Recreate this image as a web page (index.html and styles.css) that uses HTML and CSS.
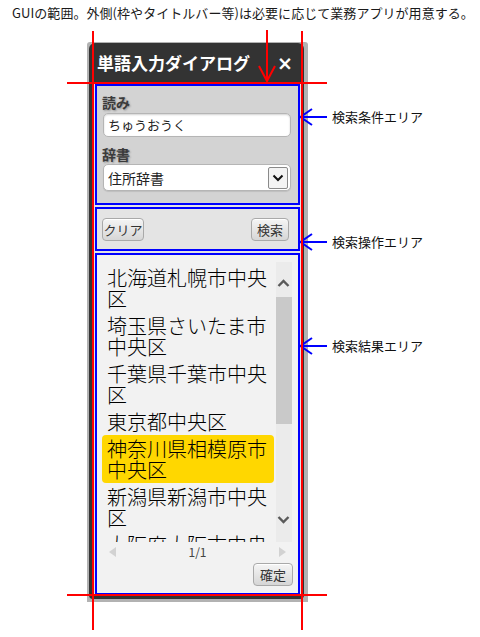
FILE: index.html
```html
<!DOCTYPE html>
<html lang="ja">
<head>
<meta charset="utf-8">
<title>単語入力ダイアログ</title>
<link rel="stylesheet" href="styles.css">
</head>
<body>
<p class="caption">GUIの範囲。外側(枠やタイトルバー等)は必要に応じて業務アプリが用意する。</p>
<div class="stage">
  <div class="backdrop">
    <div class="dialog">
      <div class="titlebar">
        <span class="title">単語入力ダイアログ</span>
        <span class="close">×</span>
      </div>
      <div class="body">
        <section class="area cond">
          <div class="label">読み</div>
          <div class="input">ちゅうおうく</div>
          <div class="label label-gap">辞書</div>
          <div class="select">
            <span class="select-text">住所辞書</span>
            <span class="drop"><svg width="12" height="8" viewBox="0 0 12 8"><polyline points="1.5,1.5 6,6 10.5,1.5" fill="none" stroke="#111" stroke-width="2"/></svg></span>
          </div>
        </section>
        <section class="area ops">
          <button class="btn btn-clear">クリア</button>
          <button class="btn btn-search">検索</button>
        </section>
        <section class="area results">
          <div class="listwrap">
            <ul class="list">
              <li class="item">北海道札幌市中央区</li>
              <li class="item">埼玉県さいたま市中央区</li>
              <li class="item">千葉県千葉市中央区</li>
              <li class="item">東京都中央区</li>
              <li class="item selected">神奈川県相模原市中央区</li>
              <li class="item">新潟県新潟市中央区</li>
              <li class="item">大阪府大阪市中央区</li>
            </ul>
            <svg class="scrollbar" width="16" height="280" viewBox="0 0 16 280">
              <rect x="0" y="0" width="16" height="280" fill="#ebebeb"/>
              <rect x="0" y="35" width="16" height="127" fill="#c9c9c9"/>
              <polyline points="2.5,24 7.5,19 12.5,24" fill="none" stroke="#5a5a5a" stroke-width="2.4"/>
              <polyline points="2.5,255 7.5,260 12.5,255" fill="none" stroke="#5a5a5a" stroke-width="2.4"/>
            </svg>
          </div>
          <div class="pager">
            <svg width="8" height="10" viewBox="0 0 8 10"><polygon points="7,0 7,10 0,5" fill="#d2d2d2"/></svg>
            <span class="pager-text">1/1</span>
            <svg width="8" height="10" viewBox="0 0 8 10"><polygon points="1,0 1,10 8,5" fill="#d2d2d2"/></svg>
          </div>
          <div class="footer">
            <button class="btn btn-ok">確定</button>
          </div>
        </section>
      </div>
    </div>
  </div>
  <div class="notes">
    <div class="note note-1">
      <svg class="note-arrow" width="30" height="20" viewBox="0 0 30 20"><line x1="1" y1="10" x2="28" y2="10" stroke="#0000ff" stroke-width="2"/><polyline points="13,2 1.5,10 13,18" fill="none" stroke="#0000ff" stroke-width="2"/></svg>
      <span class="note-text">検索条件エリア</span>
    </div>
    <div class="note note-2">
      <svg class="note-arrow" width="30" height="20" viewBox="0 0 30 20"><line x1="1" y1="10" x2="28" y2="10" stroke="#0000ff" stroke-width="2"/><polyline points="13,2 1.5,10 13,18" fill="none" stroke="#0000ff" stroke-width="2"/></svg>
      <span class="note-text">検索操作エリア</span>
    </div>
    <div class="note note-3">
      <svg class="note-arrow" width="30" height="20" viewBox="0 0 30 20"><line x1="1" y1="10" x2="28" y2="10" stroke="#0000ff" stroke-width="2"/><polyline points="13,2 1.5,10 13,18" fill="none" stroke="#0000ff" stroke-width="2"/></svg>
      <span class="note-text">検索結果エリア</span>
    </div>
  </div>
</div>
<svg class="guides" width="480" height="637" viewBox="0 0 480 637">
  <line x1="93" y1="31" x2="93" y2="630" stroke="#ff0000" stroke-width="2"/>
  <line x1="302" y1="31" x2="302" y2="630" stroke="#ff0000" stroke-width="2"/>
  <line x1="67" y1="83" x2="327" y2="83" stroke="#ff0000" stroke-width="2"/>
  <line x1="67" y1="595" x2="327" y2="595" stroke="#ff0000" stroke-width="2"/>
  <line x1="267" y1="30" x2="267" y2="80" stroke="#ff0000" stroke-width="2"/>
  <polyline points="259,66 267,81 275,66" fill="none" stroke="#ff0000" stroke-width="2"/>
</svg>
</body>
</html>
```

FILE: styles.css
```css
* {
  box-sizing: border-box;
}

html, body {
  margin: 0;
  padding: 0;
  background: #ffffff;
}

body {
  position: relative;
  width: 480px;
  height: 637px;
  overflow: hidden;
  font-family: "Noto Sans CJK JP", "Noto Sans", sans-serif;
  color: #111;
}

.caption {
  margin: 0;
  height: 42px;
  padding: 3px 0 0 12px;
  font-size: 13px;
  line-height: 19px;
  color: #1a1a1a;
  white-space: nowrap;
  letter-spacing: 0.05px;
}

.stage {
  display: flex;
  align-items: flex-start;
  padding-left: 87px;
}

.backdrop {
  width: 221px;
  height: 560px;
  padding: 1px 4px 3px 2px;
  background: #b2b2b2;
  border-radius: 3px 3px 0 0;
}

.dialog {
  width: 215px;
  height: 556px;
  background: #333333;
  border-radius: 6px 6px 4px 4px;
  padding: 0 2px 4px 4px;
  display: flex;
  flex-direction: column;
}

.titlebar {
  height: 40px;
  flex: none;
  display: flex;
  align-items: center;
  justify-content: space-between;
  padding: 0 9px 0 4px;
}

.title {
  color: #ffffff;
  font-size: 17px;
  font-weight: bold;
  line-height: 20px;
}

.close {
  color: #ffffff;
  font-family: "DejaVu Sans", sans-serif;
  font-weight: bold;
  font-size: 19px;
  line-height: 20px;
}

.body {
  width: 209px;
  height: 512px;
  background: #e2e2e2;
  padding: 1px 2px 0 2px;
  display: flex;
  flex-direction: column;
  gap: 2px;
}

.area {
  border: 2px solid #0000ff;
  width: 205px;
}

.cond {
  height: 121px;
  background: #d3d3d3;
  padding: 7px 7px 0 6px;
}

.label {
  font-size: 14px;
  font-weight: bold;
  line-height: 18px;
  height: 18px;
  color: #3b3b3b;
  margin-left: -1px;
  text-shadow: 1px 1px 2px rgba(0, 0, 0, 0.3);
}

.label-gap {
  margin-top: 8px;
}

.input {
  margin-top: 2px;
  height: 24px;
  background: #ffffff;
  border: 1px solid #b5b5b5;
  border-radius: 5px;
  box-shadow: inset 0 1px 2px rgba(0, 0, 0, 0.18);
  font-size: 13px;
  line-height: 22px;
  padding-left: 4px;
  color: #222;
}

.select {
  margin-top: 1px;
  height: 27px;
  background: #ffffff;
  border: 1px solid #b5b5b5;
  border-radius: 5px;
  box-shadow: 0 1px 1px rgba(0, 0, 0, 0.1);
  display: flex;
  align-items: center;
  justify-content: space-between;
  padding: 0 2px 0 4px;
}

.select-text {
  font-size: 14px;
  line-height: 20px;
  color: #222;
}

.drop {
  width: 20px;
  height: 22px;
  border: 1px solid #8a8a8a;
  border-radius: 2px;
  background: #f3f3f3;
  display: flex;
  align-items: center;
  justify-content: center;
}

.ops {
  height: 44px;
  background: #e4e4e4;
  display: flex;
  align-items: center;
  justify-content: space-between;
  padding: 0 9px 0 5px;
}

.btn {
  height: 23px;
  padding: 0;
  margin: 0;
  border: 1px solid #a9a9a9;
  border-radius: 4px;
  background: linear-gradient(#f5f5f5, #d6d6d6);
  box-shadow: inset 0 1px 0 #ffffff;
  font-family: "Noto Sans CJK JP", "Noto Sans", sans-serif;
  font-size: 13px;
  line-height: 21px;
  color: #333;
}

.btn-clear {
  width: 42px;
}

.btn-search {
  width: 38px;
}

.btn-ok {
  width: 40px;
}

.results {
  height: 342px;
  background: #f2f2f2;
  padding-top: 7px;
}

.listwrap {
  display: flex;
  height: 280px;
  overflow: hidden;
}

.list {
  list-style: none;
  margin: 0 0 0 5px;
  padding: 2px 0 0 0;
  width: 172px;
  height: 280px;
  overflow: hidden;
}

.item {
  padding: 3px 5px;
  font-size: 20px;
  font-weight: 300;
  line-height: 21px;
  color: #000;
  word-break: break-all;
  border-radius: 4px;
}

.selected {
  background: #ffd700;
}

.scrollbar {
  margin-left: 2px;
  flex: none;
  display: block;
}

.pager {
  height: 20px;
  display: flex;
  align-items: center;
  justify-content: space-between;
  padding: 0 12px 0 12px;
}

.pager svg {
  display: block;
}

.pager-text {
  font-size: 12px;
  line-height: 16px;
  color: #444;
}

.footer {
  display: flex;
  justify-content: flex-end;
  padding: 1px 5px 0 0;
}

.notes {
  display: flex;
  flex-direction: column;
  margin-left: -9px;
}

.note {
  display: flex;
  align-items: center;
  height: 20px;
}

.note-1 {
  margin-top: 65px;
}

.note-2 {
  margin-top: 105px;
}

.note-3 {
  margin-top: 84px;
}

.note-arrow {
  display: block;
  flex: none;
}

.note-text {
  margin-left: 3px;
  font-size: 13px;
  line-height: 18px;
  color: #111;
  white-space: nowrap;
}

.guides {
  position: absolute;
  top: 0;
  left: 0;
  pointer-events: none;
}
```
